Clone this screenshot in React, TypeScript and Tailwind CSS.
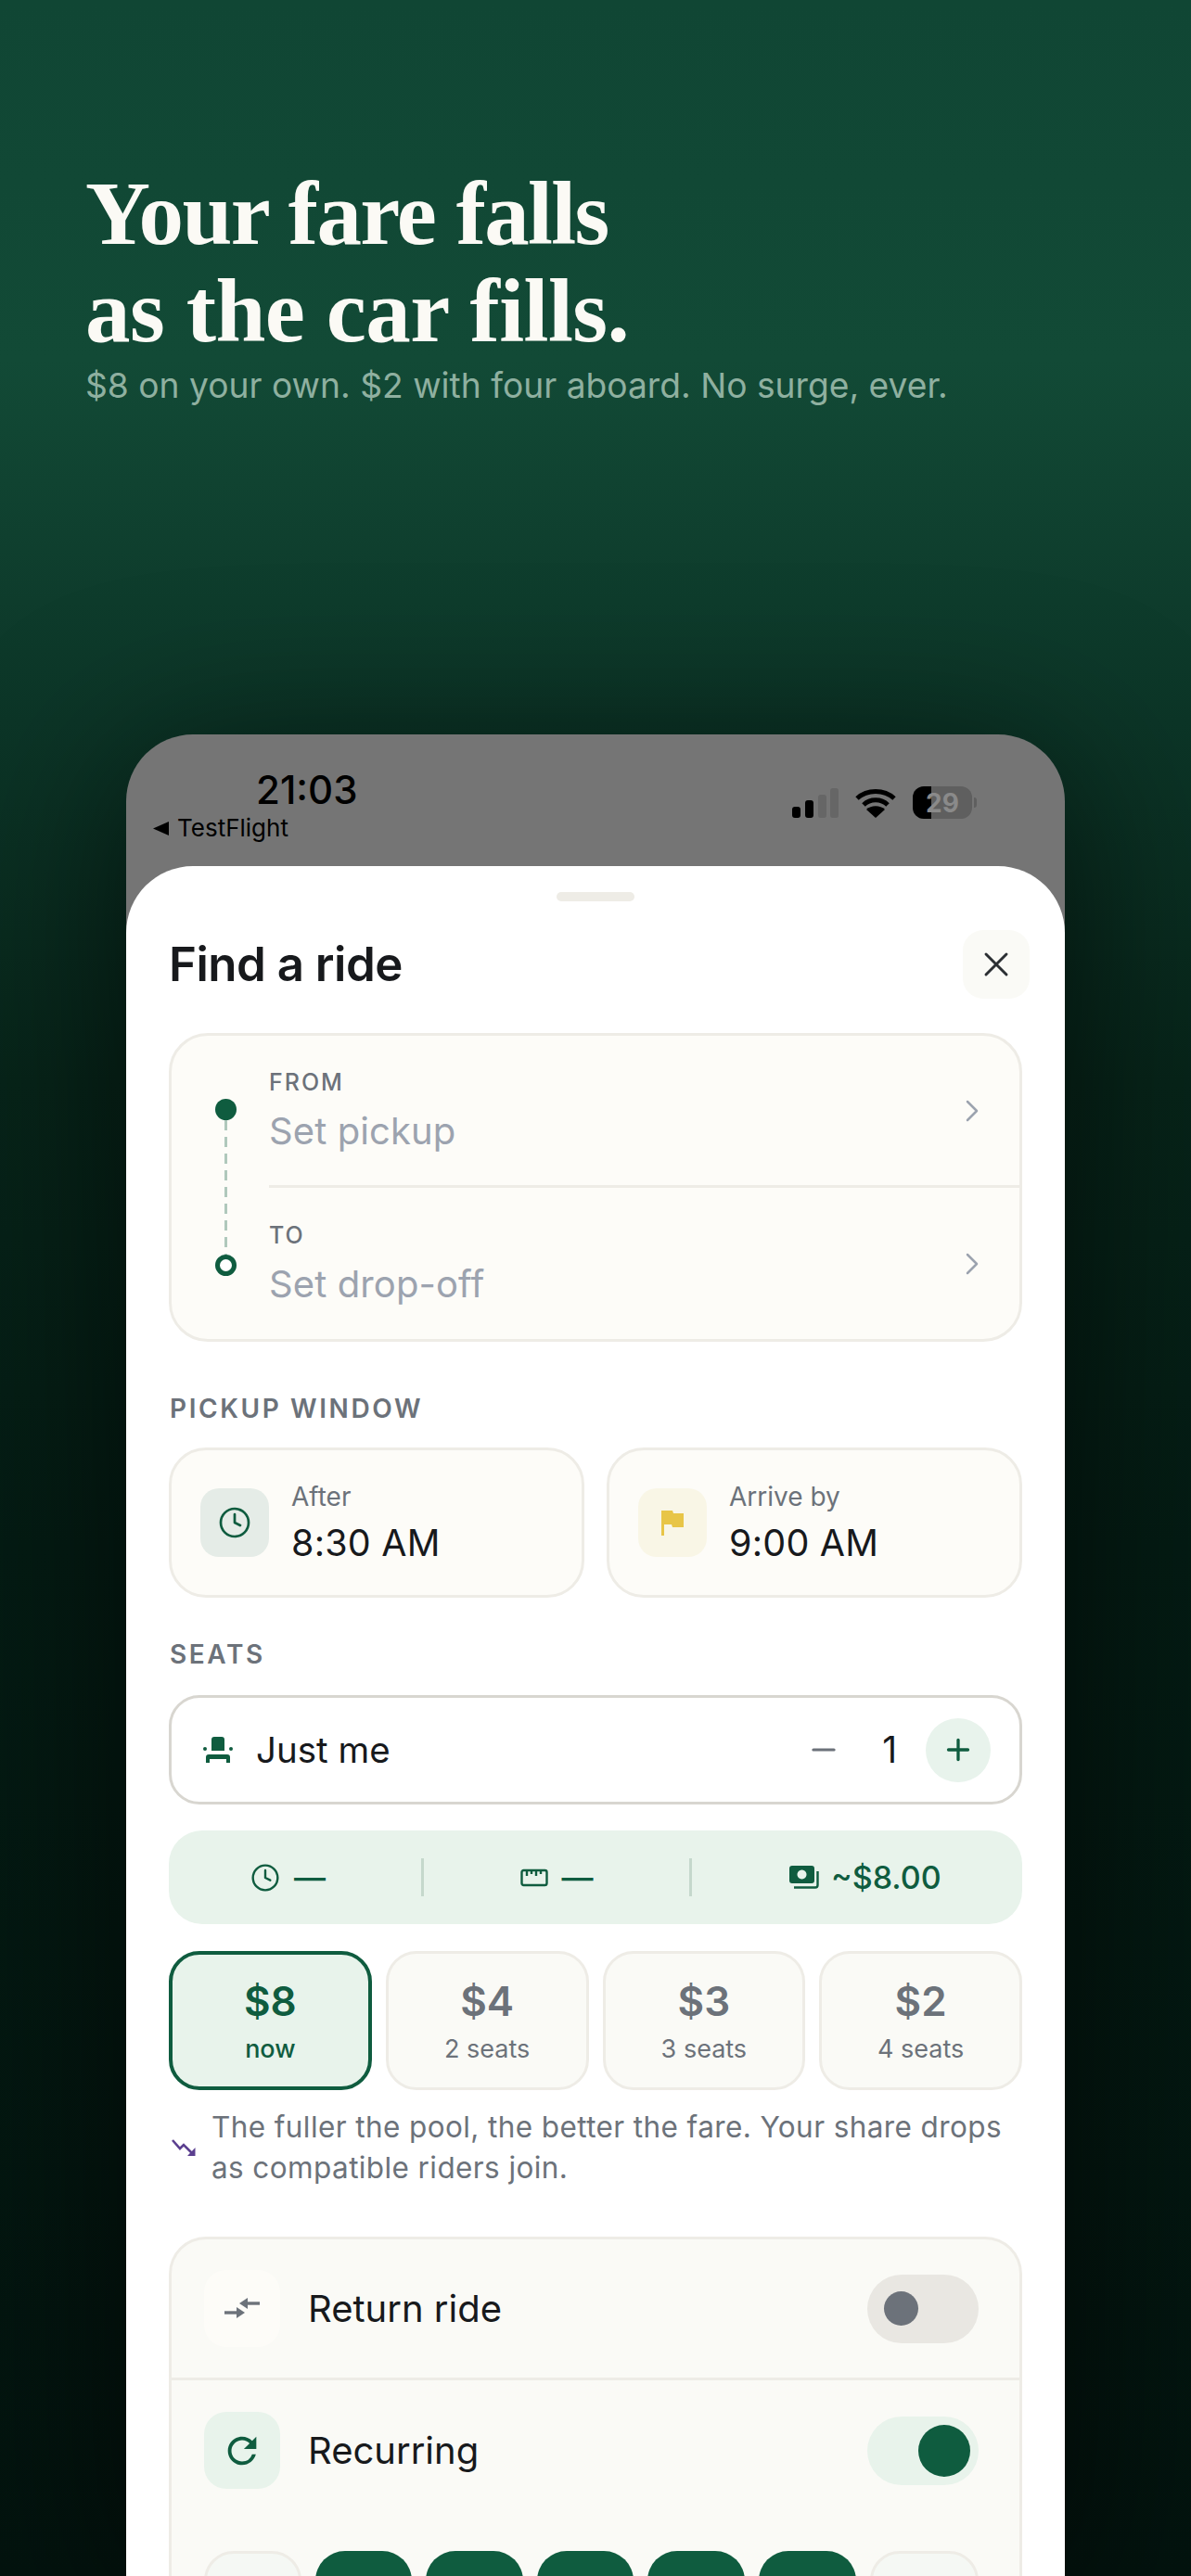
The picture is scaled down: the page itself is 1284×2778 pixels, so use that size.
import { ChevronRight, Clock, Minus, Plus, X } from 'lucide-react';
import { MdRefresh } from 'react-icons/md';

const fares = [
  { price: '$8', label: 'now', active: true },
  { price: '$4', label: '2 seats', active: false },
  { price: '$3', label: '3 seats', active: false },
  { price: '$2', label: '4 seats', active: false },
];

const days = [
  { on: false, width: 'w-[106px]' },
  { on: true, width: 'w-[106px]' },
  { on: true, width: 'w-[106px]' },
  { on: true, width: 'w-[106px]' },
  { on: true, width: 'w-[106px]' },
  { on: true, width: 'w-[106px]' },
  { on: false, width: 'w-[119px]' },
];

const SignalIcon = () => (
  <svg width="50" height="32" viewBox="0 0 50 32">
    <rect x="0" y="20" width="9" height="12" rx="3" fill="#000" />
    <rect x="14" y="13" width="9" height="19" rx="3" fill="#000" />
    <rect x="28" y="7" width="9" height="25" rx="3" fill="#666" />
    <rect x="41" y="0" width="9" height="32" rx="3" fill="#666" />
  </svg>
);

const WifiIcon = () => (
  <svg width="44" height="32" viewBox="0 0 44 32" fill="none">
    <path d="M2 11 C13 1 31 1 42 11" stroke="#000" strokeWidth="5" />
    <path d="M9 18 C16 11 28 11 35 18" stroke="#000" strokeWidth="5" />
    <path d="M22 32 L12 23 C17 18 27 18 32 23 Z" fill="#000" />
  </svg>
);

const BatteryIcon = () => (
  <div className="flex items-center gap-[2px]">
    <div className="relative h-[35px] w-[64px] overflow-hidden rounded-[12px] bg-[#5f5f5f]">
      <div className="h-full w-[20px] bg-black" />
      <span className="absolute inset-0 flex items-center justify-center text-[28px] font-bold text-[#8a8a8a]">29</span>
    </div>
    <div className="h-[11px] w-[3px] rounded-r-full bg-[#5f5f5f]" />
  </div>
);

const FlagIcon = () => (
  <svg width="24" height="27" viewBox="0 0 24 27" fill="#e8c547">
    <path d="M0 0 H12 L13 3 H24 V18 H12 L11 15 H3 V27 H0 Z" />
  </svg>
);

const SeatIcon = () => (
  <svg width="32" height="28" viewBox="0 0 32 28" fill="#0f5c3f">
    <path d="M9 3 a3 3 0 0 1 3 -3 h8 a3 3 0 0 1 3 3 v12 H9 Z" />
    <circle cx="2" cy="13" r="2" />
    <circle cx="30" cy="13" r="2" />
    <path d="M3 28 V22 a3 3 0 0 1 3 -3 h20 a3 3 0 0 1 3 3 v6 h-4 v-4 H7 v4 Z" />
  </svg>
);

const RulerIcon = () => (
  <svg width="30" height="22" viewBox="0 0 30 22" fill="none" stroke="#0f5c3f" strokeWidth="2.4">
    <rect x="1.5" y="3" width="27" height="16" rx="2" />
    <path d="M7 3 V9 M12 3 V7 M17 3 V9 M22 3 V7" />
  </svg>
);

const MoneyIcon = () => (
  <svg width="32" height="28" viewBox="0 0 32 28" fill="none">
    <path fillRule="evenodd" clipRule="evenodd" fill="#0f5c3f" d="M3 1 H24 a3 3 0 0 1 3 3 V17 a3 3 0 0 1 -3 3 H3 a3 3 0 0 1 -3 -3 V4 a3 3 0 0 1 3 -3 Z M13.5 5.5 a5 5 0 1 0 0.01 0 Z" />
    <path d="M30.5 7 V22 a2.5 2.5 0 0 1 -2.5 2.5 H5" stroke="#0f5c3f" strokeWidth="2.4" />
  </svg>
);

const DownIcon = () => (
  <svg className="shrink-0" width="26" height="19" viewBox="0 0 26 19" fill="none" stroke="#5b3f8f" strokeWidth="2.6">
    <path d="M1 1 L9 10 L13 6 L22 15" />
    <path d="M25.5 9 V18 H17 Z" fill="#5b3f8f" stroke="none" />
  </svg>
);

const SwapIcon = () => (
  <svg width="38" height="24" viewBox="0 0 38 24" fill="none" stroke="#6c727a" strokeWidth="3.4">
    <path d="M20 6 H38" />
    <path d="M16 6 L25 0 V12 Z" fill="#6c727a" stroke="none" />
    <path d="M0 16 H18" />
    <path d="M22 16 L13 10 V22 Z" fill="#6c727a" stroke="none" />
  </svg>
);

export default function App() {
  return (
    <div className="flex h-[2778px] flex-col overflow-hidden bg-[linear-gradient(180deg,#104634_0%,#124a36_14%,#0c3527_28%,#072419_42%,#041b13_60%,#03130e_100%)] font-['Inter',sans-serif]">
      {/* Headline */}
      <header className="pl-[92px] pt-[178px]">
        <h1 className="font-['Liberation_Serif',serif] text-[97px] font-bold leading-[105px] tracking-[-0.6px] text-[#fbfaf5]">
          <span className="tracking-[-1.7px]">Your fare falls</span>
          <br />
          as the car fills.
        </h1>
        <p className="mt-[5px] text-[37.2px] leading-[46px] text-[#8fb0a0]">
          $8 on your own. $2 with four aboard. No surge, ever.
        </p>
      </header>

      {/* Phone */}
      <div className="mx-[136px] mt-[353px] flex min-h-0 flex-1 flex-col overflow-hidden rounded-t-[72px] bg-[#757575] shadow-[0_30px_180px_rgba(0,0,0,0.6)]">
        {/* Status bar */}
        <div className="flex h-[142px] shrink-0 items-start justify-between pl-[29px] pr-[95px] pt-[36px]">
          <div>
            <div className="ml-[111px] text-[42px] font-medium leading-[48px] text-black">21:03</div>
            <div className="mt-[1px] flex items-center gap-[9px] text-[26px] leading-[32px] text-black">
              <svg width="17" height="15" viewBox="0 0 17 15" fill="#000"><path d="M17 0 V15 L0 7.5 Z" /></svg>
              TestFlight
            </div>
          </div>
          <div className="mt-[20px] flex items-center gap-[18px]">
            <SignalIcon />
            <WifiIcon />
            <BatteryIcon />
          </div>
        </div>

        {/* Sheet */}
        <div className="flex-1 rounded-t-[72px] bg-white px-[46px] pt-[28px]">
          <div className="mx-auto h-[10px] w-[84px] rounded-full bg-[#eeece6]" />

          <div className="mt-[31px] flex h-[74px] items-center justify-between">
            <h2 className="text-[51px] font-semibold tracking-[-0.5px] text-[#17191c]">Find a ride</h2>
            <button className="-mr-[8px] flex h-[74px] w-[72px] items-center justify-center rounded-[22px] bg-[#fafaf6]">
              <X size={44} strokeWidth={1.6} color="#2b2f33" />
            </button>
          </div>

          {/* Route card */}
          <div className="mt-[37px] flex h-[333px] rounded-[42px] border-[3px] border-[#eeece6] bg-[#fdfcf8]">
            <div className="flex w-[105px] shrink-0 flex-col items-center pl-[12px] pt-[68px]">
              <div className="h-[23px] w-[23px] shrink-0 rounded-full bg-[#0f5c3f]" />
              <div className="h-[145px] w-[3px] bg-[repeating-linear-gradient(180deg,#b0c8bc_0,#b0c8bc_11px,transparent_11px,transparent_18px)]" />
              <div className="h-[23px] w-[23px] shrink-0 rounded-full border-[5px] border-[#0f5c3f] bg-white" />
            </div>
            <div className="min-w-0 flex-1">
              <div className="flex h-[164px] items-center justify-between border-b-[3px] border-[#eeece6] pr-[31px]">
                <div>
                  <div className="text-[25px] font-medium leading-[30px] tracking-[2px] text-[#6c727a]">FROM</div>
                  <div className="mt-[14px] text-[40px] leading-[48px] tracking-[0.1px] text-[#9ca3af]">Set pickup</div>
                </div>
                <ChevronRight size={40} color="#9ca3af" strokeWidth={1.5} />
              </div>
              <div className="flex h-[164px] items-center justify-between pr-[31px]">
                <div>
                  <div className="text-[25px] font-medium leading-[30px] tracking-[2px] text-[#6c727a]">TO</div>
                  <div className="mt-[14px] text-[40px] leading-[48px] tracking-[0.1px] text-[#9ca3af]">Set drop-off</div>
                </div>
                <ChevronRight size={40} color="#9ca3af" strokeWidth={1.5} />
              </div>
            </div>
          </div>

          <div className="mt-[55px] pl-[1px] text-[28px] font-semibold leading-[34px] tracking-[2.6px] text-[#6c727a]">PICKUP WINDOW</div>

          {/* Pickup window */}
          <div className="mt-[25px] grid grid-cols-2 gap-[24px]">
            <div className="flex h-[162px] items-center gap-[24px] rounded-[40px] border-[3px] border-[#eeece6] bg-[#fdfcf8] pl-[31px]">
              <div className="flex h-[74px] w-[74px] items-center justify-center rounded-[20px] bg-[#e5ece7]">
                <Clock size={36} color="#0f5c3f" strokeWidth={1.8} />
              </div>
              <div>
                <div className="text-[28px] leading-[36px] text-[#6c727a]">After</div>
                <div className="mt-[8px] text-[39.5px] leading-[48px] tracking-[0.2px] text-[#17191c]">8:30 AM</div>
              </div>
            </div>
            <div className="flex h-[162px] items-center gap-[24px] rounded-[40px] border-[3px] border-[#eeece6] bg-[#fdfcf8] pl-[31px]">
              <div className="flex h-[74px] w-[74px] items-center justify-center rounded-[20px] bg-[#f9f6e6]">
                <FlagIcon />
              </div>
              <div>
                <div className="text-[28px] leading-[36px] text-[#6c727a]">Arrive by</div>
                <div className="mt-[8px] text-[39.5px] leading-[48px] tracking-[0.2px] text-[#17191c]">9:00 AM</div>
              </div>
            </div>
          </div>

          <div className="mt-[44px] pl-[1px] text-[28px] font-semibold leading-[34px] tracking-[2.6px] text-[#6c727a]">SEATS</div>

          {/* Seats stepper */}
          <div className="mt-[27px] flex h-[118px] items-center rounded-[33px] border-[3px] border-[#d8d6d0] bg-white pl-[34px] pr-[31px]">
            <SeatIcon />
            <span className="ml-[25px] flex-1 text-[38.5px] leading-[46px] text-[#17191c]">Just me</span>
            <Minus size={38} color="#6c727a" strokeWidth={2} />
            <span className="ml-[44px] mr-[31px] text-[39px] leading-[46px] text-[#17191c]">1</span>
            <div className="flex h-[69px] w-[70px] items-center justify-center rounded-full bg-[#e8f3ec]">
              <Plus size={36} color="#0f5c3f" strokeWidth={2.2} />
            </div>
          </div>

          {/* Trip summary */}
          <div className="mt-[28px] flex h-[101px] items-center rounded-[36px] bg-[#e8f3eb] text-[34px] font-medium text-[#0f5c3f]">
            <div className="flex w-[272px] items-center gap-[15px] pl-[88px]">
              <Clock size={32} strokeWidth={1.8} />
              <span>—</span>
            </div>
            <div className="h-[41px] w-[3px] bg-[#c5d8cc]" />
            <div className="flex w-[286px] items-center justify-center gap-[15px]">
              <RulerIcon />
              <span>—</span>
            </div>
            <div className="h-[41px] w-[3px] bg-[#c5d8cc]" />
            <div className="flex flex-1 items-center gap-[13px] pl-[105px]">
              <MoneyIcon />
              <span>~$8.00</span>
            </div>
          </div>

          {/* Fare ladder */}
          <div className="mt-[29px] grid grid-cols-4 gap-[15px]">
            {fares.map((fare) => (
              <div
                key={fare.price}
                className={
                  fare.active
                    ? 'flex h-[150px] flex-col items-center justify-center rounded-[33px] border-[4px] border-[#0f5c3f] bg-[#e8f3eb] text-[#0f5c3f]'
                    : 'flex h-[150px] flex-col items-center justify-center rounded-[33px] border-[3px] border-[#eeece6] bg-[#fafaf6] text-[#6c727a]'
                }
              >
                <div className="text-[44px] font-semibold leading-[54px]">{fare.price}</div>
                <div className={fare.active ? 'mt-[8px] text-[27px] font-medium leading-[34px]' : 'mt-[8px] text-[27px] leading-[34px]'}>{fare.label}</div>
              </div>
            ))}
          </div>

          <div className="mt-[18px] flex items-center gap-[17px] pl-[3px]">
            <DownIcon />
            <p className="text-[31.5px] leading-[44px] tracking-[0.4px] text-[#6c727a]">
              The fuller the pool, the better the fare. Your share drops as compatible riders join.
            </p>
          </div>

          {/* Options */}
          <div className="mt-[52px] rounded-t-[40px] border-x-[3px] border-t-[3px] border-[#eeece6] bg-[#fafaf6]">
            <div className="flex h-[152px] items-center border-b-[3px] border-[#eeece6] pl-[35px] pr-[44px]">
              <div className="flex h-[83px] w-[82px] items-center justify-center rounded-[24px] bg-[#fdfcf8]">
                <SwapIcon />
              </div>
              <span className="ml-[30px] flex-1 text-[40px] leading-[48px] text-[#17191c]">Return ride</span>
              <div className="flex h-[74px] w-[120px] items-center rounded-full bg-[#e9e7e2] pl-[18px]">
                <div className="h-[37px] w-[37px] rounded-full bg-[#6c727a]" />
              </div>
            </div>
            <div className="pl-[35px] pr-[44px] pt-[34px]">
              <div className="flex items-center">
                <div className="flex h-[83px] w-[82px] items-center justify-center rounded-[24px] bg-[#e8f3eb]">
                  <MdRefresh size={46} color="#0f5c3f" />
                </div>
                <span className="ml-[30px] flex-1 text-[40px] leading-[48px] text-[#17191c]">Recurring</span>
                <div className="flex h-[74px] w-[120px] items-center justify-end rounded-full bg-[#e8f3eb] pr-[9px]">
                  <div className="h-[56px] w-[56px] rounded-full bg-[#0f5c3f]" />
                </div>
              </div>
              <div className="mt-[67px] flex gap-[15px]">
                {days.map((day, i) => (
                  <div
                    key={i}
                    className={
                      day.on
                        ? `${day.width} h-[88px] rounded-[32px] bg-[#0f5c3f]`
                        : `${day.width} h-[88px] rounded-[32px] border-[3px] border-[#eeece6] bg-[#f5f8f4]`
                    }
                  />
                ))}
              </div>
            </div>
          </div>
        </div>
      </div>
    </div>
  );
}
